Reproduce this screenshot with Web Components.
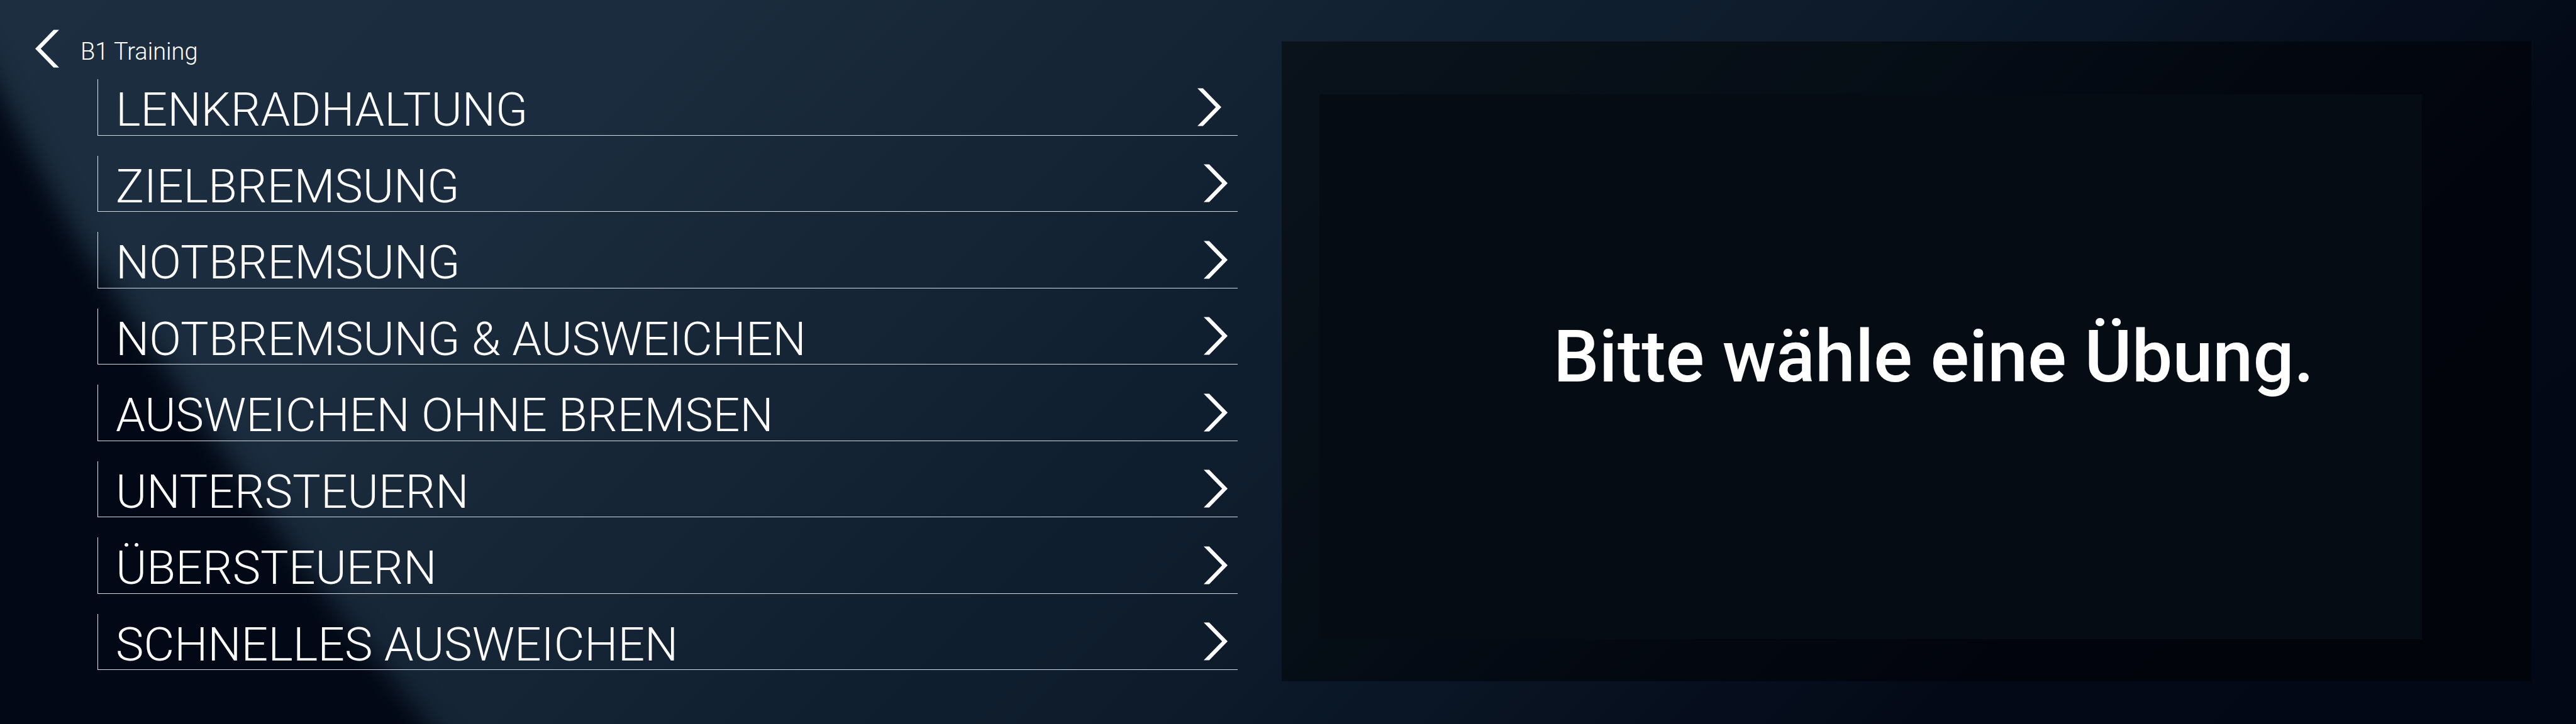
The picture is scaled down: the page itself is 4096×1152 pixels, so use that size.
<!DOCTYPE html>
<html lang="de">
<head>
<meta charset="utf-8">
<title>B1 Training</title>
<style>
html, body { height: 100%; margin: 0; }
body { background: #020713; color: #fff; font-family: Roboto, "Liberation Sans", sans-serif; overflow: hidden; }
</style>
</head>
<body>
<training-app>
  <back-link slot="header">B1 Training</back-link>
  <exercise-list slot="list">
    <exercise-item lead>LENKRADHALTUNG</exercise-item>
    <exercise-item>ZIELBREMSUNG</exercise-item>
    <exercise-item>NOTBREMSUNG</exercise-item>
    <exercise-item>NOTBREMSUNG &amp; AUSWEICHEN</exercise-item>
    <exercise-item>AUSWEICHEN OHNE BREMSEN</exercise-item>
    <exercise-item>UNTERSTEUERN</exercise-item>
    <exercise-item>ÜBERSTEUERN</exercise-item>
    <exercise-item>SCHNELLES AUSWEICHEN</exercise-item>
  </exercise-list>
  <preview-panel slot="preview">Bitte wähle eine Übung.</preview-panel>
</training-app>

<script>
const define = (name, html) => {
  const template = document.createElement('template');
  template.innerHTML = html;
  customElements.define(name, class extends HTMLElement {
    constructor() {
      super();
      this.attachShadow({ mode: 'open' }).append(template.content.cloneNode(true));
    }
  });
};

define('night-backdrop', `
  <style>
    :host { display: block; background: linear-gradient(135deg, #1c2e3f 0%, #1b2c3e 20%, #162636 33%, #112030 45%, #0c1a2a 58%, #07101f 71%, #030917 80%, #020815 100%); }
    svg { display: block; width: 100%; height: 100%; }
  </style>
  <svg viewBox="0 0 4096 1152" preserveAspectRatio="none" aria-hidden="true">
    <defs>
      <filter id="soft" x="-20%" y="-20%" width="140%" height="140%" color-interpolation-filters="sRGB"><feGaussianBlur stdDeviation="20"/></filter>
    </defs>
    <path d="M-200 -230 L-60 30 L30 205 L126 384 L186 472 L259 580 L429 824 L528 960 L680 1152 L830 1350 L-200 1350 Z" fill="#020815" filter="url(#soft)"/>
  </svg>`);

define('training-app', `
  <style>
    :host { display: grid; position: relative; height: 100%; box-sizing: border-box; grid-template-columns: 1912fr 1987fr; column-gap: 70px; padding: 0 71px 0 56px; }
    night-backdrop { position: absolute; inset: 0; z-index: -1; }
    .side { display: flex; flex-direction: column; gap: 18px; padding: 47px 0 86px; min-width: 0; }
    .list { flex: 1; display: grid; padding-left: 99px; }
    .preview { display: grid; padding: 66px 0 68px; }
  </style>
  <night-backdrop></night-backdrop>
  <div class="side">
    <slot name="header"></slot>
    <div class="list"><slot name="list"></slot></div>
  </div>
  <main class="preview"><slot name="preview"></slot></main>`);

define('back-link', `
  <style>
    :host { display: flex; }
    button { display: flex; align-items: center; gap: 34px; height: 61px; padding: 0; border: 0; background: none; color: inherit; font: 300 38px/48px Roboto, "Liberation Sans", sans-serif; cursor: pointer; }
    svg { display: block; width: 38px; height: 61px; }
    span { padding-top: 8px; }
  </style>
  <button type="button">
    <svg viewBox="0 0 48 76" fill="#fff" aria-hidden="true"><path d="M48 0H37L0 38L37 76H48L11 38Z"/></svg>
    <span><slot></slot></span>
  </button>`);

define('exercise-list', `
  <style>
    :host { display: block; }
    nav { display: grid; grid-auto-rows: 1fr; gap: 32px; height: 100%; }
  </style>
  <nav aria-label="Übungen"><slot></slot></nav>`);

define('exercise-item', `
  <style>
    :host { display: grid; --end: 16px; }
    :host([lead]) { --end: 26px; }
    button { display: flex; align-items: center; justify-content: space-between; padding: 0 var(--end) 0 28px; border: 0 solid #fff; border-left: 1px solid #e4e7ea; border-bottom: 1px solid #d5d9dd; border-radius: 0; background: none; color: inherit; text-align: left; font: 300 75px/80px Roboto, "Liberation Sans", sans-serif; cursor: pointer; }
    span { padding-top: 8px; }
    svg { display: block; width: 38px; height: 61px; }
  </style>
  <button type="button">
    <span><slot></slot></span>
    <svg viewBox="0 0 48 76" fill="#fff" aria-hidden="true"><path d="M0 0H11L48 38L11 76H0L37 38Z"/></svg>
  </button>`);

define('preview-panel', `
  <style>
    :host { display: grid; padding: 84px 174px 67px 60px; background: rgba(0, 0, 0, .46); }
    .screen { display: flex; align-items: center; padding: 0 0 32px 372px; background: #050c14; }
    p { margin: 0; font-size: 115px; line-height: 136px; font-weight: 500; white-space: nowrap; }
  </style>
  <div class="screen"><p><slot></slot></p></div>`);
</script>
</body>
</html>
